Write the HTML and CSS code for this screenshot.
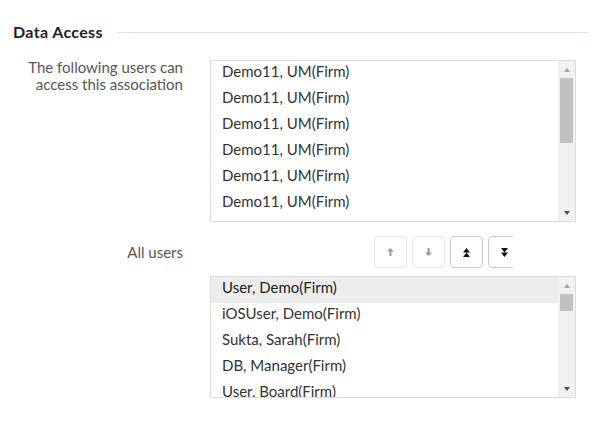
FILE: index.html
```html
<!DOCTYPE html>
<html lang="en">
<head>
<meta charset="utf-8">
<title>Data Access</title>
<link rel="stylesheet" href="styles.css">
</head>
<body>
<div class="panel">
  <div class="legend">
    <span class="legend-title">Data Access</span>
    <span class="legend-rule"></span>
  </div>

  <div class="field">
    <div class="field-label">The following users can<br>access this association</div>
    <div class="listbox listbox-tall">
      <ul class="options">
        <li>Demo11, UM(Firm)</li>
        <li>Demo11, UM(Firm)</li>
        <li>Demo11, UM(Firm)</li>
        <li>Demo11, UM(Firm)</li>
        <li>Demo11, UM(Firm)</li>
        <li>Demo11, UM(Firm)</li>
        <li>Demo11, UM(Firm)</li>
      </ul>
      <div class="scrollbar">
        <div class="sb-btn"><span class="tri-up"></span></div>
        <div class="sb-track"><div class="sb-thumb thumb-tall"></div></div>
        <div class="sb-btn"><span class="tri-down active"></span></div>
      </div>
    </div>
  </div>

  <div class="field field-buttons">
    <div class="field-label">All users</div>
    <div class="btn-strip">
      <button class="move-btn disabled" type="button" aria-label="Move up">
        <svg width="7" height="8" viewBox="0 0 7 8"><path d="M3.5 0L7 3.6H4.5V8H2.5V3.6H0Z" fill="#9a9a9a"/></svg>
      </button>
      <button class="move-btn disabled" type="button" aria-label="Move down">
        <svg width="7" height="8" viewBox="0 0 7 8"><path d="M3.5 8L7 4.4H4.5V0H2.5V4.4H0Z" fill="#9a9a9a"/></svg>
      </button>
      <button class="move-btn" type="button" aria-label="Move to top">
        <svg width="7" height="9" viewBox="0 0 7 9"><path d="M3.5 0L7 4.5H0Z M3.5 4.5L7 9H0Z" fill="#111"/></svg>
      </button>
      <button class="move-btn" type="button" aria-label="Move to bottom">
        <svg width="7" height="9" viewBox="0 0 7 9"><path d="M0 0H7L3.5 4.5Z M0 4.5H7L3.5 9Z" fill="#111"/></svg>
      </button>
    </div>
  </div>

  <div class="field field-list2">
    <div class="field-label"></div>
    <div class="listbox listbox-short">
      <ul class="options">
        <li class="selected">User, Demo(Firm)</li>
        <li>iOSUser, Demo(Firm)</li>
        <li>Sukta, Sarah(Firm)</li>
        <li>DB, Manager(Firm)</li>
        <li>User, Board(Firm)</li>
      </ul>
      <div class="scrollbar">
        <div class="sb-btn"><span class="tri-up"></span></div>
        <div class="sb-track"><div class="sb-thumb thumb-short"></div></div>
        <div class="sb-btn"><span class="tri-down active"></span></div>
      </div>
    </div>
  </div>
</div>
</body>
</html>
```

FILE: styles.css
```css
* { box-sizing: border-box; }

html, body {
  margin: 0;
  padding: 0;
  background: #ffffff;
}

body {
  font-family: Lato, "Liberation Sans", Arial, sans-serif;
  font-size: 15px;
  color: #333333;
}

.panel {
  padding: 22px 5px 0 0;
}

.legend {
  display: flex;
  align-items: center;
  gap: 14px;
  padding-left: 13px;
  height: 20px;
}

.legend-title {
  font-size: 16px;
  font-weight: 700;
  line-height: 20px;
  letter-spacing: 0.35px;
  color: #222222;
  white-space: nowrap;
}

.legend-rule {
  flex: 1;
  height: 1px;
  background: #dbe3ec;
}

.field {
  display: flex;
  gap: 27px;
  margin-top: 18px;
}

.field-label {
  width: 183px;
  flex: none;
  text-align: right;
  color: #555555;
  line-height: 17px;
  margin-top: -1px;
}

.field-buttons {
  margin-top: 14px;
  align-items: center;
}

.field-buttons .field-label {
  margin-top: 0;
}

.field-list2 {
  margin-top: 8px;
}

.listbox {
  width: 366px;
  border: 1px solid #dcdcdc;
  display: flex;
  overflow: hidden;
  background: #ffffff;
}

.listbox-tall { height: 162px; }
.listbox-short { height: 122px; }

.options {
  list-style: none;
  margin: 0;
  padding: 0;
  flex: 1;
  overflow: hidden;
}

.options li {
  height: 26px;
  line-height: 21px;
  padding: 0 0 5px 11px;
  color: #333333;
  white-space: nowrap;
}

.options li.selected {
  background: #ececec;
  color: #222222;
}

.scrollbar {
  width: 17px;
  flex: none;
  background: #f1f1f1;
  display: flex;
  flex-direction: column;
}

.sb-btn {
  height: 17px;
  flex: none;
  display: flex;
  align-items: center;
  justify-content: center;
}

.sb-track {
  flex: 1;
  padding: 0 2px;
}

.sb-thumb {
  background: #c1c1c1;
}

.thumb-tall { height: 65px; }
.thumb-short { height: 17px; }

.tri-up, .tri-down {
  width: 0;
  height: 0;
  border-left: 3.5px solid transparent;
  border-right: 3.5px solid transparent;
}

.tri-up { border-bottom: 4px solid #a3a3a3; }
.tri-down { border-top: 4px solid #a3a3a3; }
.tri-down.active { border-top-color: #505050; }

.btn-strip {
  display: flex;
  gap: 5px;
  margin-left: 164px;
  width: 139px;
  overflow: hidden;
}

.move-btn {
  flex: none;
  width: 33px;
  height: 32px;
  padding: 0;
  margin: 0;
  border: 1px solid #c8c8c8;
  border-radius: 4px;
  background: #ffffff;
  display: flex;
  align-items: center;
  justify-content: center;
}

.move-btn.disabled {
  border-color: #e3e3e3;
}
```
